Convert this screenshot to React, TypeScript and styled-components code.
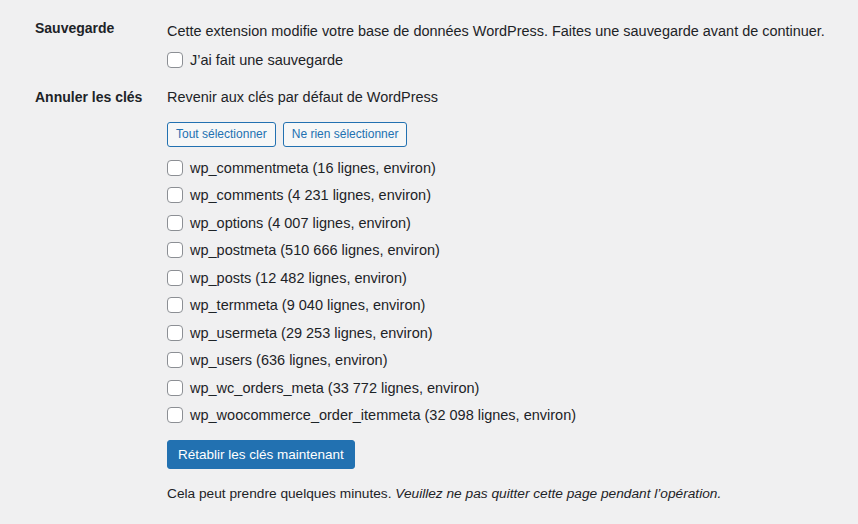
import React from "react";
import styled, { createGlobalStyle } from "styled-components";

const Global = createGlobalStyle`
  html, body { margin: 0; padding: 0; background: #f0f0f1; }
  body { font-family: "Liberation Sans", Arial, sans-serif; color: #1d2327; font-size: 14px; }
  * { box-sizing: border-box; }
`;

const Page = styled.div`
  width: 858px;
  height: 524px;
  padding: 18px 0 0 35px;
  display: grid;
  grid-template-columns: 132px 1fr;
  align-content: start;
  overflow: hidden;
`;

const Label = styled.div<{ $top?: number }>`
  font-weight: 700;
  font-size: 14px;
  line-height: 20px;
  padding-top: ${(p) => p.$top ?? 0}px;
`;

const Cell = styled.div<{ $top?: number }>`
  display: flex;
  flex-direction: column;
  align-items: flex-start;
  padding-top: ${(p) => p.$top ?? 0}px;
`;

const Desc = styled.p`
  margin: 0;
  font-size: 14.45px;
  line-height: 20px;
  white-space: nowrap;
`;

const CheckRow = styled.label<{ $h: number; $mt?: number }>`
  display: flex;
  align-items: center;
  gap: 7px;
  height: ${(p) => p.$h}px;
  margin-top: ${(p) => p.$mt ?? 0}px;
  font-size: 14.5px;
  white-space: nowrap;
`;

const Box = styled.span`
  width: 16px;
  height: 16px;
  border: 1px solid #8c8f94;
  border-radius: 4px;
  background: #fff;
  flex: none;
`;

const Buttons = styled.div`
  display: flex;
  gap: 7px;
  margin-top: 15px;
`;

const SmallButton = styled.button`
  height: 25px;
  padding: 0 8px;
  border: 1px solid #2271b1;
  border-radius: 3px;
  background: #f6f7f7;
  color: #2271b1;
  font-family: inherit;
  font-size: 12px;
  line-height: 23px;
`;

const List = styled.div`
  margin-top: 7.3px;
  display: flex;
  flex-direction: column;
`;

const PrimaryButton = styled.button`
  margin-top: 11.3px;
  height: 29px;
  padding: 0 10px;
  border: 1px solid #2271b1;
  border-radius: 3px;
  background: #2271b1;
  color: #fff;
  font-family: inherit;
  font-size: 13.5px;
`;

const Note = styled.p`
  margin: 15px 0 0;
  font-size: 13.7px;
  line-height: 20px;
  white-space: nowrap;
  em { font-style: italic; }
`;

const tables = [
  "wp_commentmeta (16 lignes, environ)",
  "wp_comments (4 231 lignes, environ)",
  "wp_options (4 007 lignes, environ)",
  "wp_postmeta (510 666 lignes, environ)",
  "wp_posts (12 482 lignes, environ)",
  "wp_termmeta (9 040 lignes, environ)",
  "wp_usermeta (29 253 lignes, environ)",
  "wp_users (636 lignes, environ)",
  "wp_wc_orders_meta (33 772 lignes, environ)",
  "wp_woocommerce_order_itemmeta (32 098 lignes, environ)",
];

export default function App() {
  return (
    <>
      <Global />
      <Page>
        <Label>Sauvegarde</Label>
        <Cell $top={3}>
          <Desc>Cette extension modifie votre base de données WordPress. Faites une sauvegarde avant de continuer.</Desc>
          <CheckRow $h={28} $mt={5}>
            <Box />
            J’ai fait une sauvegarde
          </CheckRow>
        </Cell>
        <Label $top={13}>Annuler les clés</Label>
        <Cell $top={13}>
          <Desc>Revenir aux clés par défaut de WordPress</Desc>
          <Buttons>
            <SmallButton>Tout sélectionner</SmallButton>
            <SmallButton>Ne rien sélectionner</SmallButton>
          </Buttons>
          <List>
            {tables.map((t) => (
              <CheckRow key={t} $h={27.44}>
                <Box />
                {t}
              </CheckRow>
            ))}
          </List>
          <PrimaryButton>Rétablir les clés maintenant</PrimaryButton>
          <Note>
            Cela peut prendre quelques minutes. <em>Veuillez ne pas quitter cette page pendant l’opération.</em>
          </Note>
        </Cell>
      </Page>
    </>
  );
}
